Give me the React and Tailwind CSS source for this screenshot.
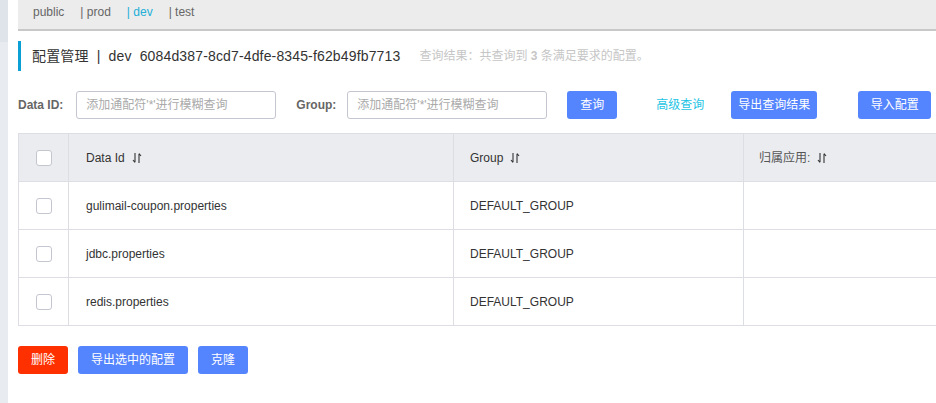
import React from "react";

const font = { fontFamily: '"Liberation Sans", "Noto Sans CJK SC", sans-serif' };

function SortIcon() {
  return (
    <svg width="10" height="12" viewBox="0 0 10 12" className="ml-[7px] inline-block">
      <path d="M3 1 V10 M1 8 L3 10.5" stroke="#333" strokeWidth="1.1" fill="none" />
      <path d="M7 11 V2 M7 1.5 L9 4" stroke="#333" strokeWidth="1.1" fill="none" />
    </svg>
  );
}

function Checkbox() {
  return <div className="w-4 h-4 rounded-[3px] border border-[#c4c6cf] bg-white" />;
}

const rows = [
  "gulimail-coupon.properties",
  "jdbc.properties",
  "redis.properties",
];

export default function App() {
  return (
    <div className="flex w-[936px] h-[403px] bg-white overflow-hidden text-[#333]" style={font}>
      <div className="w-2 shrink-0 flex flex-col">
        <div className="h-[42px] bg-[#dfe3ea]" />
        <div className="flex-1 bg-[#e8ebf0]" />
      </div>
      <div className="flex-1 pl-[10px] min-w-0">
        <div className="h-[31px] bg-[#ececec] border-b-2 border-[#c8c8c8] flex items-start pt-[3px] pl-[15px] text-[12px] text-[#666]">
          <span>public</span>
          <span className="ml-[16px]">| prod</span>
          <span className="ml-[16px] text-[#22b0d8]">| dev</span>
          <span className="ml-[16px]">| test</span>
        </div>
        <div className="mt-[10px] h-[30px] flex items-center border-l-[3px] border-[#0aa0d6] pl-[11px]">
          <span className="text-[14px] tracking-[0.15px] text-[#333]">配置管理 &nbsp;|&nbsp; dev &nbsp;6084d387-8cd7-4dfe-8345-f62b49fb7713</span>
          <span className="ml-[19px] text-[12px] text-[#c6c6c6]">
            查询结果：共查询到 <b className="font-bold">3</b> 条满足要求的配置。
          </span>
        </div>
        <div className="mt-[20px] h-[28px] flex items-center text-[12px]">
          <span className="font-bold text-[#666]">Data ID:</span>
          <div className="ml-[13px] w-[200px] h-[28px] border border-[#c4c6cf] rounded-[3px] flex items-center pl-[9px] text-[#aaa]">
            添加通配符'*'进行模糊查询
          </div>
          <span className="ml-[20px] font-bold text-[#666]">Group:</span>
          <div className="ml-[11px] w-[200px] h-[28px] border border-[#c4c6cf] rounded-[3px] flex items-center pl-[9px] text-[#aaa]">
            添加通配符'*'进行模糊查询
          </div>
          <button className="ml-[20px] w-[50px] h-[28px] rounded-[3px] bg-[#5584ff] text-white">查询</button>
          <span className="ml-[39px] text-[#1dc4e4]">高级查询</span>
          <button className="ml-[27px] w-[86px] h-[28px] rounded-[3px] bg-[#5584ff] text-white">导出查询结果</button>
          <button className="ml-[41px] w-[73px] h-[28px] rounded-[3px] bg-[#5584ff] text-white">导入配置</button>
        </div>
        <div className="mt-[14px] w-[960px] border-t border-l border-[#dcdee3] text-[12px]">
          <div className="flex h-[48px] bg-[#ebecf0] border-b border-[#dcdee3]">
            <div className="w-[50px] shrink-0 border-r border-[#dcdee3] flex items-center justify-center">
              <Checkbox />
            </div>
            <div className="w-[385px] shrink-0 border-r border-[#dcdee3] flex items-center pl-[17px]">
              Data Id<SortIcon />
            </div>
            <div className="w-[290px] shrink-0 border-r border-[#dcdee3] flex items-center pl-[16px]">
              Group<SortIcon />
            </div>
            <div className="flex-1 flex items-center pl-[15px] text-[#555]">
              归属应用:<SortIcon />
            </div>
          </div>
          {rows.map((r) => (
            <div key={r} className="flex h-[48px] bg-white border-b border-[#dcdee3]">
              <div className="w-[50px] shrink-0 border-r border-[#dcdee3] flex items-center justify-center">
                <Checkbox />
              </div>
              <div className="w-[385px] shrink-0 border-r border-[#dcdee3] flex items-center pl-[17px]">{r}</div>
              <div className="w-[290px] shrink-0 border-r border-[#dcdee3] flex items-center pl-[16px]">DEFAULT_GROUP</div>
              <div className="flex-1" />
            </div>
          ))}
        </div>
        <div className="mt-[20px] flex gap-[10px] text-[12px] text-white">
          <button className="w-[50px] h-[28px] rounded-[3px] bg-[#ff3000]">删除</button>
          <button className="w-[110px] h-[28px] rounded-[3px] bg-[#5584ff]">导出选中的配置</button>
          <button className="w-[50px] h-[28px] rounded-[3px] bg-[#5584ff]">克隆</button>
        </div>
      </div>
    </div>
  );
}
